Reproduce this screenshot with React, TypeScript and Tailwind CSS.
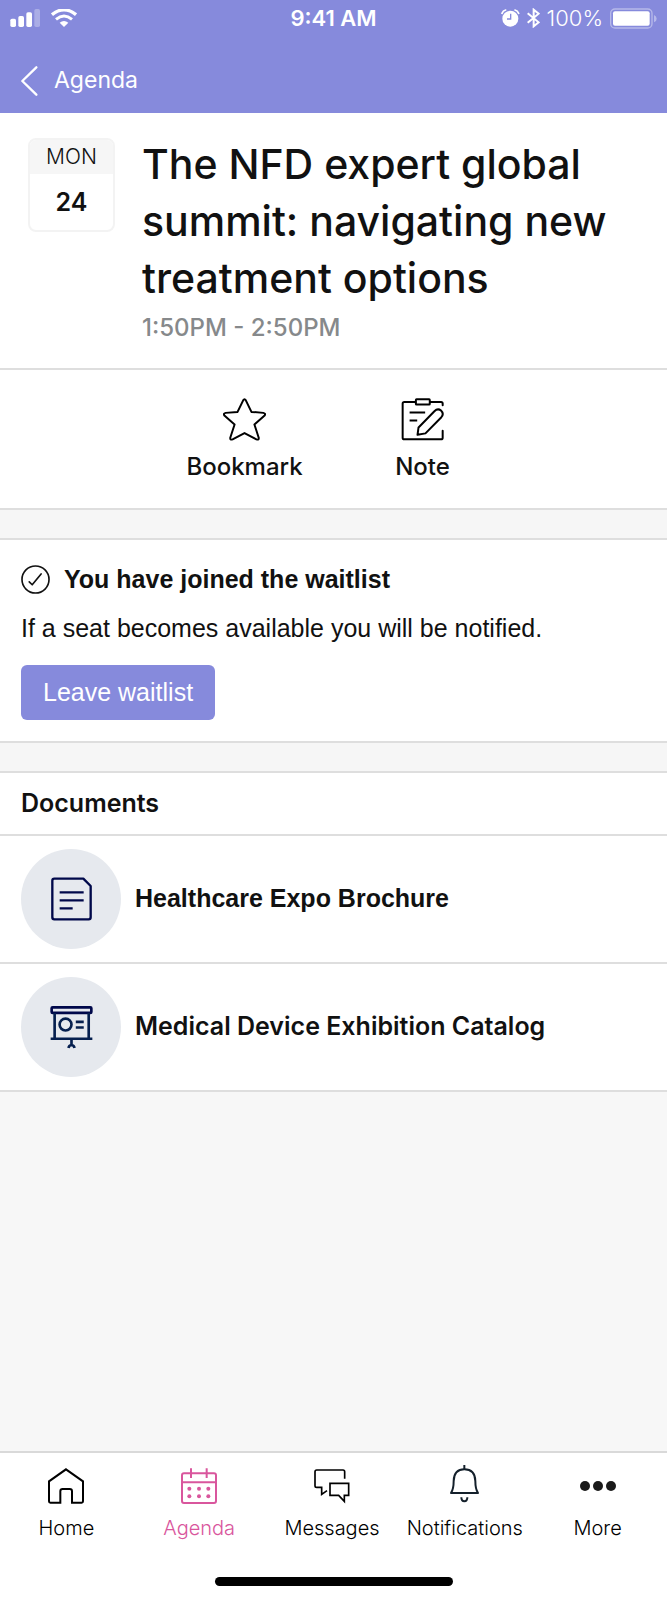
import { ReactNode } from "react";

interface ActionItem {
    label: string;
    icon: ReactNode;
}

interface DocumentItem {
    title: string;
    font: string;
    icon: ReactNode;
}

interface TabItem {
    label: string;
    active?: boolean;
    icon: ReactNode;
}

const SignalIcon = () => (
    <svg width="30" height="18" viewBox="0 0 90 54" fill="#fff">
        <rect x="1" y="29" width="17" height="25" rx="5" />
        <rect x="25" y="21" width="17" height="33" rx="5" />
        <rect x="49" y="10" width="17" height="44" rx="5" />
        <rect x="73" y="0" width="17" height="54" rx="5" opacity="0.3" />
    </svg>
);

const WifiIcon = () => (
    <svg width="26" height="18" viewBox="0 0 78 54" fill="none">
        <path d="M3 17 Q39 -12 75 17" stroke="#fff" strokeWidth="10" />
        <path d="M15 31 Q39 11 63 31" stroke="#fff" strokeWidth="9" />
        <path d="M26 41 Q39 31 52 41 L39 54 Z" fill="#fff" />
    </svg>
);

const AlarmIcon = () => (
    <svg width="19" height="18" viewBox="0 0 57 54" fill="none">
        <circle cx="28" cy="29" r="24" fill="#fff" />
        <path
            d="M3 13 Q6 5 14 3 M42 3 Q50 5 53 13"
            stroke="#fff"
            strokeWidth="5"
            strokeLinecap="round"
        />
        <path d="M29 14 V30 H18" stroke="#868adc" strokeWidth="4" />
    </svg>
);

const BluetoothIcon = () => (
    <svg width="13" height="20" viewBox="0 0 39 60" fill="none">
        <path
            d="M2 16 L35 43 L20 55 V5 L35 17 L2 44"
            stroke="#fff"
            strokeWidth="6"
        />
    </svg>
);

const BatteryIcon = () => (
    <svg width="47" height="21" viewBox="0 0 141 63" fill="none">
        <rect
            x="2"
            y="3"
            width="124"
            height="57"
            rx="13"
            stroke="#fff"
            strokeWidth="4"
            opacity="0.4"
        />
        <rect x="9" y="10" width="110" height="43" rx="6" fill="#fff" />
        <path d="M132 21 Q140 24 140 32 Q140 40 132 43 Z" fill="#fff" opacity="0.4" />
    </svg>
);

const BackIcon = () => (
    <svg width="17" height="30" viewBox="0 0 51 90" fill="none">
        <path
            d="M46 4 L4 45 L46 86"
            stroke="#fff"
            strokeWidth="7"
            strokeLinecap="round"
            strokeLinejoin="round"
        />
    </svg>
);

const StarIcon = () => (
    <svg width="43" height="43" viewBox="0 0 130 130" fill="none">
        <path
            d="M61 7 Q65 0 69 7 L86 42 L122 45 Q131 47 125 54 L95 80 L108 120 Q109 128 101 125 L65 106 L29 125 Q21 128 22 120 L35 80 L5 54 Q-1 47 8 45 L44 42 Z"
            stroke="#000"
            strokeWidth="6"
            strokeLinejoin="round"
        />
    </svg>
);

const NoteIcon = () => (
    <svg width="43" height="43" viewBox="0 0 130 130" fill="none">
        <g
            stroke="#000"
            strokeWidth="6"
            strokeLinecap="round"
            strokeLinejoin="round"
        >
            <path d="M43 12 H10 Q5 12 5 17 V120 Q5 125 10 125 H121 Q126 125 126 120 V99" />
            <path d="M88 12 H121 Q126 12 126 17 V22" />
            <rect x="45" y="4" width="42" height="16" rx="2" />
            <path d="M50 111 L53 89 L101 40 Q111 30 121 38 Q131 48 122 58 L74 107 Z" />
        </g>
        <path d="M26 44 H73 M26 68 H49" stroke="#000" strokeWidth="6" />
    </svg>
);

const CheckCircleIcon = () => (
    <svg width="29" height="29" viewBox="0 0 88 88" fill="none">
        <g stroke="#111" strokeWidth="5" strokeLinecap="round">
            <circle cx="44" cy="44" r="41" />
            <path d="M25 51 L34 60 L61 27" strokeLinejoin="round" />
        </g>
    </svg>
);

const BrochureIcon = () => (
    <svg width="41" height="44" viewBox="0 0 123 132" fill="none">
        <path
            d="M97 5 H10 Q4 5 4 11 V121 Q4 127 10 127 H113 Q119 127 119 121 V27 Z"
            stroke="#00084a"
            strokeWidth="7"
            strokeLinejoin="round"
        />
        <path d="M26 46 H98 M26 70 H98 M26 94 H65" stroke="#00084a" strokeWidth="7" />
    </svg>
);

const CatalogIcon = () => (
    <svg width="43" height="43" viewBox="0 0 128 130" fill="none">
        <g stroke="#06204f" strokeWidth="8">
            <rect x="4" y="4" width="120" height="17" rx="3" stroke="#00084a" />
            <path d="M13 21 V98 M116 21 V98" />
            <path d="M1 99 H127" />
            <circle cx="46" cy="56" r="18" />
            <path d="M77 48 H101 M77 65 H101" />
            <path d="M64 99 V117 M55 127 Q56 119 64 118 Q72 119 73 127" />
        </g>
    </svg>
);

const HomeIcon = () => (
    <svg width="36" height="36" viewBox="0 0 108 108" fill="none">
        <path
            d="M54 4 L105 40 V100 Q105 104 101 104 H72 V70 Q72 63 65 63 H44 Q37 63 37 70 V104 H7 Q3 104 3 100 V40 Z"
            stroke="#000"
            strokeWidth="6"
        />
    </svg>
);

const AgendaIcon = () => (
    <svg width="36" height="36" viewBox="0 0 108 108" fill="none">
        <g stroke="#d9569d" strokeWidth="6">
            <rect x="3" y="16" width="102" height="89" rx="6" />
            <path d="M3 43 H105 M30 1 V30 M77 1 V30" />
        </g>
        <g fill="#d9569d">
            <circle cx="25" cy="62" r="6" />
            <circle cx="54" cy="62" r="6" />
            <circle cx="82" cy="62" r="6" />
            <circle cx="25" cy="85" r="6" />
            <circle cx="54" cy="85" r="6" />
            <circle cx="82" cy="85" r="6" />
        </g>
    </svg>
);

const MessagesIcon = () => (
    <svg width="36" height="36" viewBox="0 0 108 108" fill="none">
        <g stroke="#000" strokeWidth="5">
            <path d="M92 32 V11 Q92 6 87 6 H8 Q3 6 3 11 V53 Q3 58 8 58 H23 V79 L39 68" />
            <path d="M48 46 H104 V82 H91 V100 L74 82 H48 Z" />
        </g>
    </svg>
);

const BellIcon = () => (
    <svg width="29" height="42" viewBox="0 0 87 126" fill="none">
        <g stroke="#14202b" strokeWidth="6">
            <path
                d="M3 84 Q11 72 11 48 Q12 13 43 13 Q75 13 76 48 Q76 72 84 84 Z"
                strokeLinejoin="round"
            />
            <path d="M43 0 V13" />
            <path d="M34 97 Q34 109 43 109 Q52 109 52 97" />
        </g>
    </svg>
);

const MoreIcon = () => (
    <svg width="36" height="10" viewBox="0 0 108 30" fill="#1a1a1a">
        <circle cx="15" cy="15" r="15" />
        <circle cx="54" cy="15" r="15" />
        <circle cx="93" cy="15" r="15" />
    </svg>
);

const actions: ActionItem[] = [
    { label: "Bookmark", icon: <StarIcon /> },
    { label: "Note", icon: <NoteIcon /> },
];

const documents: DocumentItem[] = [
    {
        title: "Healthcare Expo Brochure",
        font: "font-['Liberation_Sans',sans-serif] font-bold",
        icon: <BrochureIcon />,
    },
    {
        title: "Medical Device Exhibition Catalog",
        font: "font-['Inter',sans-serif] font-semibold",
        icon: <CatalogIcon />,
    },
];

const tabs: TabItem[] = [
    { label: "Home", icon: <HomeIcon /> },
    { label: "Agenda", active: true, icon: <AgendaIcon /> },
    { label: "Messages", icon: <MessagesIcon /> },
    { label: "Notifications", icon: <BellIcon /> },
    { label: "More", icon: <MoreIcon /> },
];

const Header = () => (
    <header className="bg-[#868adc] text-white font-['Inter',sans-serif]">
        <div className="flex h-9 items-center px-[10px]">
            <div className="flex flex-1 items-center gap-[11px]">
                <SignalIcon />
                <WifiIcon />
            </div>
            <span className="text-[22px] font-semibold">9:41 AM</span>
            <div className="flex flex-1 items-center justify-end gap-[7px]">
                <AlarmIcon />
                <BluetoothIcon />
                <span className="text-[22px] font-light">100%</span>
                <BatteryIcon />
            </div>
        </div>
        <nav className="flex h-[77px] items-center px-[21px] pt-3">
            <a href="#agenda" className="flex items-center gap-4">
                <BackIcon />
                <span className="text-[23px]">Agenda</span>
            </a>
        </nav>
    </header>
);

const EventSummary = () => (
    <section className="flex items-start gap-[27px] border-b-2 border-[#dedede] px-7 pt-[23px] pb-[21px] font-['Inter',sans-serif]">
        <div className="mt-[2px] w-[87px] shrink-0 overflow-hidden rounded-lg border-2 border-[#f3f3f3] text-center">
            <div className="bg-[#f6f6f6] text-[21px] leading-[34px] font-light">
                MON
            </div>
            <div className="text-[25px] leading-[56px] font-semibold">24</div>
        </div>
        <div>
            <h1 className="text-[41px] leading-[57px] font-medium">
                The NFD expert global summit: navigating new treatment options
            </h1>
            <p className="mt-[2px] text-[24px] leading-[38px] font-medium text-[#86898b]">
                1:50PM - 2:50PM
            </p>
        </div>
    </section>
);

const Actions = () => (
    <section className="flex justify-center pt-7 pb-[25px]">
        {actions.map((action) => (
            <button
                key={action.label}
                className="flex w-[178px] flex-col items-center gap-[9px] font-['Inter',sans-serif] text-[24px] leading-[33px] font-medium"
            >
                {action.icon}
                {action.label}
            </button>
        ))}
    </section>
);

const Divider = () => (
    <div className="h-8 border-y-2 border-[#dedede] bg-[#f6f6f6]" />
);

const Waitlist = () => (
    <section className="px-[21px] pt-6 pb-[21px] text-[25px]">
        <h2 className="flex items-center gap-[14px] text-[25px] leading-[31px] font-bold">
            <CheckCircleIcon />
            You have joined the waitlist
        </h2>
        <p className="mt-4 leading-[34px]">
            If a seat becomes available you will be notified.
        </p>
        <button className="mt-5 h-[55px] rounded-md bg-[#868adc] px-[22px] text-white">
            Leave waitlist
        </button>
    </section>
);

const Documents = () => (
    <section>
        <h2 className="border-b-2 border-[#dedede] px-[21px] font-['Inter',sans-serif] text-[25px] leading-[61px] font-semibold">
            Documents
        </h2>
        <ul>
            {documents.map((doc) => (
                <li key={doc.title} className="border-b-2 border-[#dedede]">
                    <a
                        href="#document"
                        className="flex items-center gap-[14px] px-[21px] py-[13px]"
                    >
                        <span className="flex size-[100px] shrink-0 items-center justify-center rounded-full bg-[#e6e9ee]">
                            {doc.icon}
                        </span>
                        <span className={`text-[25px] ${doc.font}`}>
                            {doc.title}
                        </span>
                    </a>
                </li>
            ))}
        </ul>
    </section>
);

const TabBar = () => (
    <footer className="border-t-2 border-[#d9d9d9] bg-white pt-[15px] pb-[14px]">
        <nav className="grid grid-cols-5 pr-[3px] font-['Inter',sans-serif]">
            {tabs.map((tab) => (
                <a
                    key={tab.label}
                    href="#tab"
                    className={`flex flex-col items-center gap-[9px] text-[20px] leading-[30px] font-light ${
                        tab.active ? "text-[#d9569d]" : "text-black"
                    }`}
                >
                    <span className="flex h-9 items-center">{tab.icon}</span>
                    {tab.label}
                </a>
            ))}
        </nav>
        <div className="mx-auto mt-[34px] h-[9px] w-[238px] rounded-full bg-black" />
    </footer>
);

const App = () => {
    return (
        <div className="flex min-h-screen flex-col bg-[#f7f7f7] font-['Liberation_Sans',sans-serif] text-[#111]">
            <Header />
            <main className="bg-white">
                <EventSummary />
                <Actions />
                <Divider />
                <Waitlist />
                <Divider />
                <Documents />
            </main>
            <div className="grow" />
            <TabBar />
        </div>
    );
};

export default App;
